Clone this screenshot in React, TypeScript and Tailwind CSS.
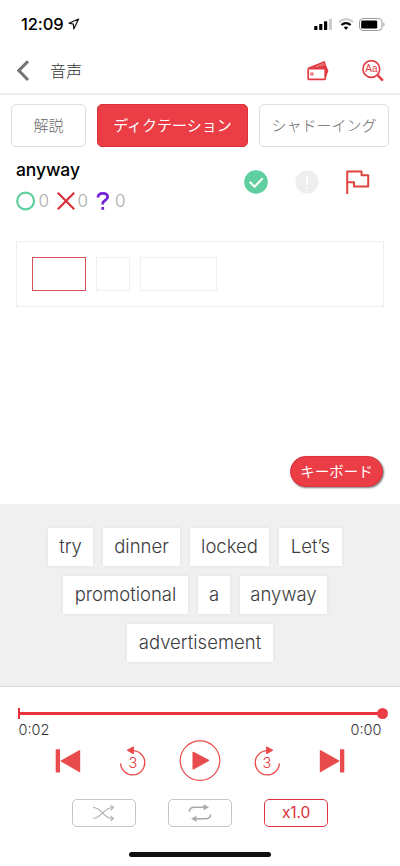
import React from "react";

const jp = "font-['Inter','Noto_Sans_CJK_JP',sans-serif]";

function StatusBar() {
  return (
    <div className="flex h-[48px] items-center justify-between pl-[21px] pr-[15px]">
      <div className="flex items-center gap-[4px]">
        <span className="w-[43px] text-[16.5px] leading-[20px] font-medium tracking-[-0.1px] text-black">12:09</span>
        <svg width="12" height="12" viewBox="0 0 12 12" fill="none" stroke="#111" strokeWidth="1.2" strokeLinejoin="round">
          <path d="M10.6 1 1 5.2l4.4.9.4 4.9z" />
        </svg>
      </div>
      <div className="flex items-center gap-[5px]">
        <svg width="19" height="12" viewBox="0 0 19 12">
          <rect x="0.2" y="8" width="3.2" height="4" rx="0.6" />
          <rect x="5.2" y="6" width="3.2" height="6" rx="0.6" />
          <rect x="10" y="3.2" width="3.2" height="8.8" rx="0.6" />
          <rect x="14.8" y="0.8" width="3.2" height="11.2" rx="0.6" fill="#ccc" />
        </svg>
        <svg width="16" height="12" viewBox="0 0 16 12" fill="none" strokeWidth="2">
          <path d="M1 4.2a10 10 0 0 1 14 0" stroke="#ccc" />
          <path d="M3.4 7a6.6 6.6 0 0 1 9.2 0" stroke="#000" strokeWidth="2.2" />
          <path d="M5.8 9.4a3.4 3.4 0 0 1 4.4 0L8 11.8z" fill="#000" />
        </svg>
        <svg width="26" height="13" viewBox="0 0 26 13" fill="none">
          <rect x="0.5" y="0.5" width="22.5" height="12" rx="3.4" stroke="#999" />
          <rect x="2.2" y="2.5" width="16" height="8" rx="1.2" fill="#000" />
          <path d="M24.4 4.5c1.5.7 1.5 3.3 0 4z" fill="#999" />
        </svg>
      </div>
    </div>
  );
}

function Header() {
  return (
    <header className="flex h-[47px] items-center border-b-2 border-[#ececec] pl-[16px] pr-[16px]">
      <svg width="14" height="22" viewBox="0 0 14 22" fill="none" stroke="#737373" strokeWidth="3">
        <path d="M12 1.2 2.8 10.6l9.2 9.4" />
      </svg>
      <h1 className="ml-[20px] flex-1 text-[16px] leading-[24px] font-light text-[#333]">音声</h1>
      <svg width="22" height="20" viewBox="0 0 22 20" fill="none" stroke="#e23a42" strokeWidth="1.7" strokeLinejoin="round">
        <rect x="1.2" y="7.6" width="17" height="10.8" rx="1" />
        <path d="M1.5 7.4 17.2 1l1.4 6.3" />
        <path d="M6 6.4 17.8 2.6l.6 4.4z" fill="#e23a42" strokeWidth="1" />
        <path d="M9 5.8l8.6-2.4" stroke="#f5a4a9" strokeWidth="0.7" />
        <path d="M18.8 5.2 20.9 9.6l-2.1 6z" fill="#e23a42" strokeWidth="1" />
        <circle cx="4.9" cy="13" r="1.3" strokeWidth="1" />
      </svg>
      <svg className="ml-[33px]" width="22" height="22" viewBox="0 0 22 22" fill="none" stroke="#e23a42">
        <circle cx="9.3" cy="9" r="8.4" strokeWidth="1.6" />
        <path d="m15.5 15.2 5.4 5.4" strokeWidth="2.4" />
        <text x="9.4" y="12.4" textAnchor="middle" fontSize="10" fontFamily="Liberation Sans" stroke="none" fill="#e23a42">Aa</text>
      </svg>
    </header>
  );
}

function Tabs() {
  return (
    <nav className="mt-[9px] flex h-[43px] gap-[11px] pl-[11px] text-[15px] font-light text-[#666]">
      <button className="w-[75px] rounded-[5px] border border-[#dedede] pt-[2px]">解説</button>
      <button className="w-[151px] rounded-[5px] border border-[#d9303a] bg-[#ea3d46] pt-[2px] font-normal text-white">ディクテーション</button>
      <button className="w-[130px] rounded-[5px] border border-[#dedede] pt-[2px]">シャドーイング</button>
    </nav>
  );
}

function WordSummary() {
  return (
    <section className="flex h-[94px] pl-[16px] pt-[11px]">
      <div className="w-[228px]">
        <h2 className="pt-px text-[17.5px] leading-[22px] font-medium tracking-[-0.1px] text-black">anyway</h2>
        <div className="mt-[9px] flex h-[22px] items-center text-[17px] font-light text-[#aaa]">
          <svg width="20" height="20" viewBox="0 0 20 20" fill="none">
            <circle cx="9.6" cy="10" r="8.4" stroke="#5fcfa0" strokeWidth="2.2" />
          </svg>
          <span className="ml-[2.5px] w-[18.5px] pt-[2px]">0</span>
          <svg width="18" height="18" viewBox="0 0 18 18" stroke="#d92f3b" strokeWidth="2.2">
            <path d="m.8.8 16.4 16.4M17.2.8.8 17.2" />
          </svg>
          <span className="ml-[2.5px] w-[18.5px] pt-[2px]">0</span>
          <svg width="14" height="20" viewBox="0 0 14 20" fill="none">
            <path d="M2 6.4C2 3.4 4 2.4 6.8 2.4c3 0 4.8 1.4 4.8 3.6 0 3.6-4.9 3.4-4.9 6.5v1" stroke="#7424d4" strokeWidth="2.8" />
            <rect x="5.3" y="16" width="2.8" height="2.8" fill="#7424d4" />
          </svg>
          <span className="ml-[5px] pt-[2px]">0</span>
        </div>
      </div>
      <div className="mt-[12px] flex h-[24px] items-center">
        <svg width="24" height="24" viewBox="0 0 24 24" fill="none">
          <circle cx="12" cy="12" r="11.8" fill="#5fcfa0" />
          <path d="m5.7 11.7 4.8 5 8.2-8.4" stroke="#fff" strokeWidth="2" />
        </svg>
        <svg className="ml-[27px]" width="24" height="24" viewBox="0 0 24 24">
          <circle cx="12" cy="12" r="11.6" fill="#eee" />
          <path d="M12 5.2v9.6M12 17v2" stroke="#fff" strokeWidth="1.6" />
        </svg>
        <svg className="ml-[26px]" width="25" height="26" viewBox="0 0 25 26" fill="none" stroke="#e04440" strokeWidth="2" strokeLinejoin="round">
          <path d="M2.2 25V2.4h14.4v3.8h6.6v11.2H9v-4.2H2.2" />
        </svg>
      </div>
    </section>
  );
}

function Chip({ word, width }: { word: string; width: string }) {
  return (
    <button className={`h-[38px] ${width} bg-white text-[18.5px] font-light tracking-[0] text-[#3c3c3c] shadow-[0_0_4px_rgba(0,0,0,0.07)]`}>
      {word}
    </button>
  );
}

function WordBank() {
  return (
    <section className="flex h-[182px] flex-col items-center gap-[10px] bg-[#f0f0f0] pt-[24px]">
      <div className="flex -translate-x-[5px] gap-[10px]">
        <Chip word="try" width="w-[45px]" />
        <Chip word="dinner" width="w-[77px]" />
        <Chip word="locked" width="w-[79px]" />
        <Chip word="Let’s" width="w-[63px]" />
      </div>
      <div className="flex -translate-x-[5px] gap-[10px]">
        <Chip word="promotional" width="w-[125px]" />
        <Chip word="a" width="w-[32px]" />
        <Chip word="anyway" width="w-[87px]" />
      </div>
      <Chip word="advertisement" width="w-[146px]" />
    </section>
  );
}

function Seek({ forward = false }: { forward?: boolean }) {
  return (
    <svg width="28" height="32" viewBox="0 0 28 32" fill="none">
      <g transform={forward ? "matrix(-1 0 0 1 28 0)" : undefined}>
        <path d="M1.6 18.4A12.1 12.1 0 1 0 13.5 5.7" stroke="#e84b4b" strokeWidth="1.3" />
        <path d="m8.2 5.2 6.2-3.4v7z" fill="#e84b4b" stroke="#e84b4b" strokeLinejoin="round" />
      </g>
      <text x="13.8" y="23" textAnchor="middle" fontFamily="Inter" fontSize="14.5" fontWeight="300" fill="#e5393f">3</text>
    </svg>
  );
}

function Skip({ forward = false }: { forward?: boolean }) {
  return (
    <svg width="26" height="24" viewBox="0 0 26 24" fill="#e84b4b">
      <g transform={forward ? "matrix(-1 0 0 1 26 0)" : undefined}>
        <rect x="0.7" y="0.3" width="4.3" height="23.2" rx="0.6" />
        <path d="M5 12 24.2 1.2a.7.7 0 0 1 1 .6v20.6a.7.7 0 0 1-1 .6z" />
      </g>
    </svg>
  );
}

function Player() {
  return (
    <section className="flex h-[180px] flex-col border-t border-[#d9d9d9] bg-white">
      <div className="ml-[18px] mr-[12px] mt-[20px] flex h-[12px] items-center">
        <span className="h-[11px] w-[2px] bg-[#e23039]" />
        <span className="h-[3px] flex-1 bg-[#e9333e]" />
        <span className="-ml-[2px] h-[11px] w-[11px] rounded-full bg-[#ea3d46]" />
      </div>
      <div className="ml-[18.5px] mr-[18.5px] mt-[1px] flex h-[20px] items-center justify-between text-[14.5px] font-light text-[#333]">
        <span>0:02</span>
        <span>0:00</span>
      </div>
      <div className="flex h-[42px] items-center pl-[55px]">
        <Skip />
        <span className="ml-[38px] flex"><Seek /></span>
        <svg className="ml-[32px]" width="42" height="42" viewBox="0 0 42 42" fill="none">
          <circle cx="21" cy="20.6" r="19.8" stroke="#e84b4b" strokeWidth="1.2" />
          <path d="m14 12 16 8.4-16 8.9z" fill="#e84b4b" stroke="#e84b4b" strokeLinejoin="round" />
        </svg>
        <span className="ml-[32px] flex"><Seek forward /></span>
        <span className="ml-[38px] flex"><Skip forward /></span>
      </div>
      <div className="mt-[17px] flex h-[28px] gap-[32px] pl-[72px]">
        <button className="flex w-[64px] items-center justify-center rounded-[5px] border border-[#c4c4c4]">
          <svg width="22" height="16" viewBox="0 0 22 16" fill="none" stroke="#b0b0b0" strokeWidth="1.1">
            <path d="M0 2.5c9 0 10 11 20 11M0 13.5c9 0 10-11 20-11M17.5 0l3 2.5-3 2.8M17.5 10.8l3 2.7-3 2.5" />
          </svg>
        </button>
        <button className="flex w-[64px] items-center justify-center rounded-[5px] border border-[#c4c4c4]">
          <svg width="24" height="18" viewBox="0 0 24 18" fill="none" stroke="#aaa" strokeWidth="1.6">
            <path d="M1.3 7.6c.2-3 2-4.4 5-4.4H17M22.7 10.4c-.2 3-2 4.4-5 4.4H7" />
            <path d="M15.5.2 21 3.2l-5.5 3zM8.5 11.8 3 14.8l5.5 3z" fill="#aaa" stroke="none" />
          </svg>
        </button>
        <button className="w-[64px] rounded-[5px] border border-[#df3442] text-[15.5px] font-normal tracking-[-0.1px] text-[#d9303b]">x1.0</button>
      </div>
      <div className="ml-[129px] mt-[25px] h-[5px] w-[142px] rounded-full bg-[#111]" />
    </section>
  );
}

export default function App() {
  return (
    <main className={`flex h-[866px] w-[400px] flex-col overflow-hidden bg-white ${jp}`} lang="ja">
      <StatusBar />
      <Header />
      <Tabs />
      <WordSummary />
      <section className="mx-[16px] flex h-[66px] gap-[10px] border border-[#eee] p-[15px]">
        <span className="h-[34px] w-[54px] border border-[#d95258]" />
        <span className="h-[34px] w-[34px] border border-[#f0f0f0]" />
        <span className="h-[34px] w-[77px] border border-[#f0f0f0]" />
      </section>
      <div className="flex h-[197px] items-end justify-end pb-[17px] pr-[17px]">
        <button className="h-[31px] w-[93px] rounded-full border border-[#dc323c] bg-[#ea3d46] text-[14.5px] leading-[20px] font-normal text-white shadow-[1px_1px_2px_rgba(0,0,0,0.5)]">
          キーボード
        </button>
      </div>
      <WordBank />
      <Player />
    </main>
  );
}
